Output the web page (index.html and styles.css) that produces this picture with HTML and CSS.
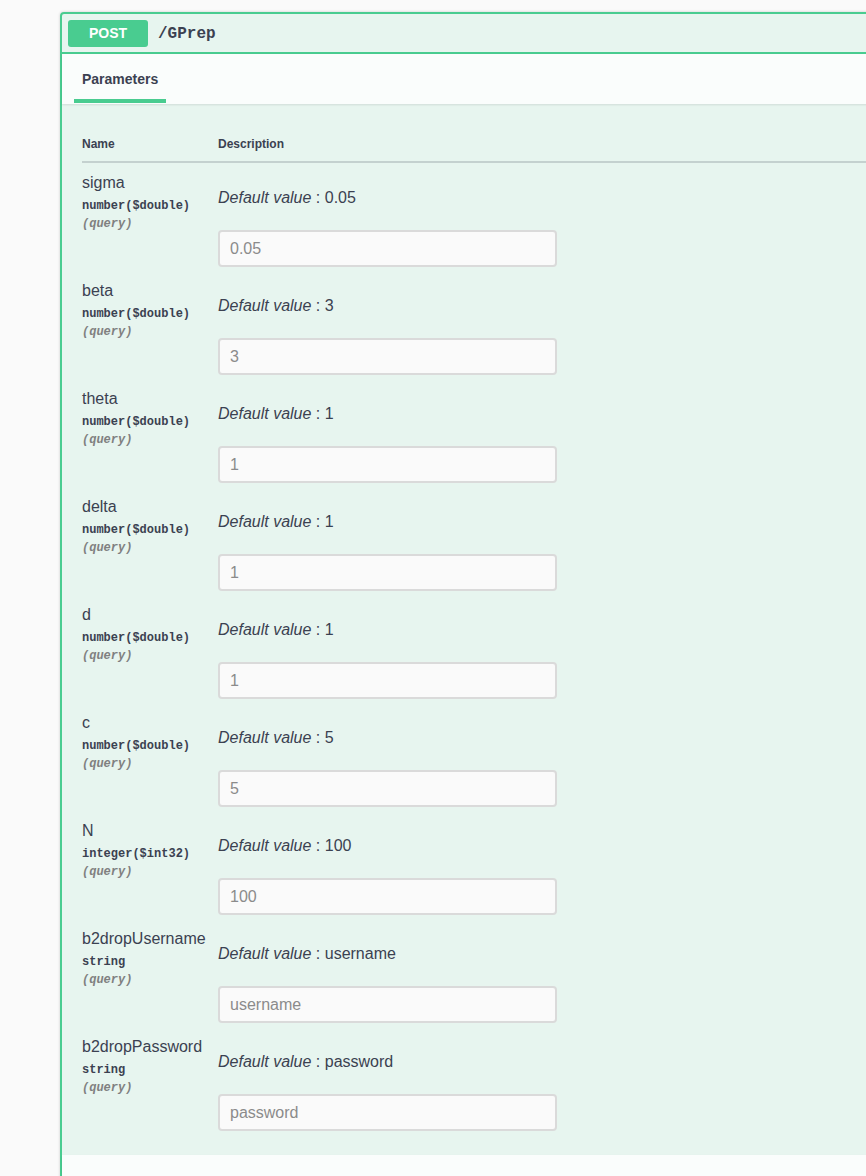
FILE: index.html
```html
<!DOCTYPE html>
<html lang="en">
<head>
<meta charset="utf-8">
<title>POST /GPrep</title>
<link rel="stylesheet" href="styles.css">
</head>
<body>
<div class="page">
  <div class="opblock">
    <div class="summary">
      <span class="method">POST</span>
      <span class="path">/GPrep</span>
    </div>
    <div class="section-header">
      <div class="tab-item"><h4>Parameters</h4></div>
    </div>
    <div class="params">
      <div class="thead">
        <div class="th">Name</div>
        <div class="th">Description</div>
      </div>

      <div class="row">
        <div class="name-cell"><div class="pname">sigma</div><div class="ptype">number<span class="fmt">($double)</span></div><div class="pin">(query)</div></div>
        <div class="desc-cell"><p class="default"><i>Default value</i> : 0.05</p><input type="text" placeholder="0.05"></div>
      </div>
      <div class="row">
        <div class="name-cell"><div class="pname">beta</div><div class="ptype">number<span class="fmt">($double)</span></div><div class="pin">(query)</div></div>
        <div class="desc-cell"><p class="default"><i>Default value</i> : 3</p><input type="text" placeholder="3"></div>
      </div>
      <div class="row">
        <div class="name-cell"><div class="pname">theta</div><div class="ptype">number<span class="fmt">($double)</span></div><div class="pin">(query)</div></div>
        <div class="desc-cell"><p class="default"><i>Default value</i> : 1</p><input type="text" placeholder="1"></div>
      </div>
      <div class="row">
        <div class="name-cell"><div class="pname">delta</div><div class="ptype">number<span class="fmt">($double)</span></div><div class="pin">(query)</div></div>
        <div class="desc-cell"><p class="default"><i>Default value</i> : 1</p><input type="text" placeholder="1"></div>
      </div>
      <div class="row">
        <div class="name-cell"><div class="pname">d</div><div class="ptype">number<span class="fmt">($double)</span></div><div class="pin">(query)</div></div>
        <div class="desc-cell"><p class="default"><i>Default value</i> : 1</p><input type="text" placeholder="1"></div>
      </div>
      <div class="row">
        <div class="name-cell"><div class="pname">c</div><div class="ptype">number<span class="fmt">($double)</span></div><div class="pin">(query)</div></div>
        <div class="desc-cell"><p class="default"><i>Default value</i> : 5</p><input type="text" placeholder="5"></div>
      </div>
      <div class="row">
        <div class="name-cell"><div class="pname">N</div><div class="ptype">integer<span class="fmt">($int32)</span></div><div class="pin">(query)</div></div>
        <div class="desc-cell"><p class="default"><i>Default value</i> : 100</p><input type="text" placeholder="100"></div>
      </div>
      <div class="row">
        <div class="name-cell"><div class="pname">b2dropUsername</div><div class="ptype">string</div><div class="pin">(query)</div></div>
        <div class="desc-cell"><p class="default"><i>Default value</i> : username</p><input type="text" placeholder="username"></div>
      </div>
      <div class="row">
        <div class="name-cell"><div class="pname">b2dropPassword</div><div class="ptype">string</div><div class="pin">(query)</div></div>
        <div class="desc-cell"><p class="default"><i>Default value</i> : password</p><input type="text" placeholder="password"></div>
      </div>
    </div>
    <div class="responses-header">
      <h4>Responses</h4>
    </div>
  </div>
</div>
</body>
</html>
```

FILE: styles.css
```css
html, body {
  margin: 0;
  padding: 0;
}
body {
  background: #fafafa;
  font-family: "Liberation Sans", Arial, sans-serif;
  color: #3b4151;
  overflow: hidden;
}
.page {
  padding: 12px 0 0 60px;
}
.opblock {
  width: 840px;
  border: 2px solid #49cc90;
  border-radius: 4px;
  background: rgba(73, 204, 144, 0.1);
  box-shadow: 0 0 3px rgba(0, 0, 0, 0.19);
}
.summary {
  display: flex;
  align-items: center;
  padding: 6px 6px 5px;
  border-bottom: 2px solid #49cc90;
}
.method {
  display: block;
  box-sizing: border-box;
  width: 80px;
  height: 27px;
  line-height: 27px;
  text-align: center;
  background: #49cc90;
  color: #fff;
  border-radius: 3px;
  font-size: 14px;
  font-weight: 700;
}
.path {
  margin-left: 10px;
  font-family: "Liberation Mono", "Courier New", monospace;
  font-weight: 700;
  font-size: 16px;
  color: #3b4151;
}
.section-header {
  background: rgba(255, 255, 255, 0.8);
  box-shadow: 0 1px 2px rgba(0, 0, 0, 0.1);
  height: 50px;
  box-sizing: border-box;
  padding: 16px 0 0 12px;
}
.tab-item {
  display: inline-block;
  padding: 0 8px 12px;
  border-bottom: 4px solid #49cc90;
}
.tab-item h4, .responses-header h4 {
  margin: 0;
  font-size: 14px;
  line-height: 16px;
  font-weight: 700;
  color: #3b4151;
}
.params {
  padding: 20px 0 20px 20px;
}
.thead {
  display: grid;
  grid-template-columns: 136px 1fr;
  border-bottom: 2px solid rgba(59, 65, 81, 0.2);
  padding: 12px 0 9px;
}
.th {
  font-size: 12px;
  line-height: 16px;
  font-weight: 700;
  color: #3b4151;
}
.row {
  display: grid;
  grid-template-columns: 136px 1fr;
  height: 108px;
  box-sizing: border-box;
}
.name-cell {
  padding-top: 10px;
}
.pname {
  font-size: 16px;
  line-height: 20px;
  color: #3b4151;
}
.ptype {
  margin-top: 4px;
  font-family: "Liberation Mono", "Courier New", monospace;
  font-size: 12px;
  font-weight: 700;
  line-height: 18px;
  color: #3b4151;
}
.pin {
  font-family: "Liberation Mono", "Courier New", monospace;
  font-size: 12px;
  font-weight: 700;
  font-style: italic;
  line-height: 18px;
  color: #808080;
}
.desc-cell {
  padding-top: 25px;
}
.default {
  margin: 0;
  font-size: 16px;
  line-height: 20px;
  color: #3b4151;
}
.desc-cell input {
  display: block;
  margin-top: 22px;
  box-sizing: border-box;
  width: 339px;
  height: 37px;
  padding: 0 10px;
  border: 2px solid #dadada;
  border-radius: 4px;
  background: #fafafa;
  font-family: "Liberation Sans", Arial, sans-serif;
  font-size: 16px;
  color: #3b4151;
  outline: none;
}
.desc-cell input::placeholder {
  color: #8b8b8b;
  opacity: 1;
}
.responses-header {
  background: rgba(255, 255, 255, 0.8);
  box-shadow: 0 1px 2px rgba(0, 0, 0, 0.1);
  min-height: 50px;
  padding: 18px 20px 16px;
}
```
